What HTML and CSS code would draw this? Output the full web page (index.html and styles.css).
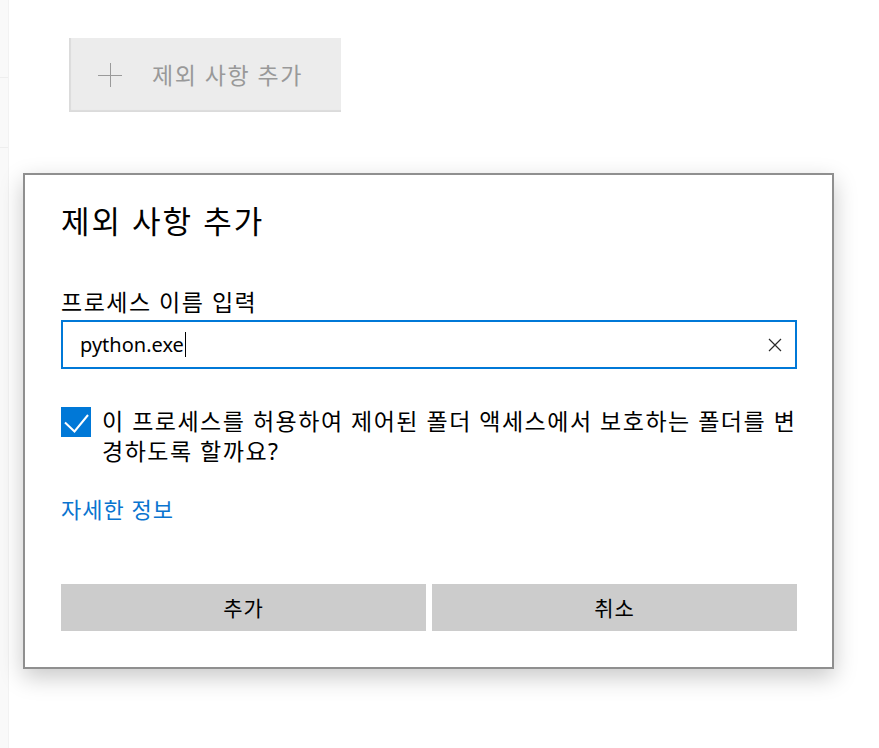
FILE: index.html
```html
<!DOCTYPE html>
<html lang="ko">
<head>
<meta charset="utf-8">
<title>제외 사항 추가</title>
<link rel="stylesheet" href="styles.css">
</head>
<body>
<div class="page">
  <div class="strip">
    <div class="strip-cell strip-a"></div>
    <div class="strip-cell strip-b"></div>
    <div class="strip-cell strip-c"></div>
  </div>
  <div class="main">
    <div class="add-btn">
      <svg class="plus" width="24" height="24" viewBox="0 0 24 24"><path d="M0 12.5H24M12.5 0V24" stroke="#9a9a9a" stroke-width="1" fill="none"/></svg>
      <span class="add-label">제외 사항 추가</span>
    </div>
    <div class="dialog">
      <div class="title">제외 사항 추가</div>
      <div class="field-label">프로세스 이름 입력</div>
      <div class="input">
        <span class="input-text">python.exe</span><span class="caret"></span>
        <svg class="clear" width="14" height="14" viewBox="0 0 14 14"><path d="M1 1L13 13M13 1L1 13" stroke="#2b2b2b" stroke-width="1.2" fill="none"/></svg>
      </div>
      <div class="check-row">
        <div class="checkbox">
          <svg width="30" height="30" viewBox="0 0 30 30"><path d="M4 15.5L13.5 24.5L27 8" stroke="#fff" stroke-width="2" fill="none"/></svg>
        </div>
        <div class="check-text">이 프로세스를 허용하여 제어된 폴더 액세스에서 보호하는 폴더를 변경하도록 할까요?</div>
      </div>
      <div class="link">자세한 정보</div>
      <div class="buttons">
        <div class="btn">추가</div>
        <div class="btn">취소</div>
      </div>
    </div>
  </div>
</div>
</body>
</html>
```
FILE: styles.css
```css
html, body {
  margin: 0;
  padding: 0;
  background: #ffffff;
}
body {
  font-family: "Noto Sans", "Noto Sans CJK KR", sans-serif;
  color: #000;
}
.page {
  display: flex;
  width: 879px;
  height: 748px;
  overflow: hidden;
}
.strip {
  width: 8px;
  flex: none;
  background: #f9f9f9;
  border-right: 1px solid #f2f2f2;
  display: flex;
  flex-direction: column;
}
.strip-cell {
  border-bottom: 1px solid #eeeeee;
}
.strip-a { height: 77px; }
.strip-b { height: 69px; }
.strip-c { flex: 1; border-bottom: none; }
.main {
  flex: 1;
  padding-top: 38px;
  padding-left: 14px;
}
.add-btn {
  margin-left: 46px;
  width: 272px;
  height: 74px;
  box-sizing: border-box;
  background: #ececec;
  box-shadow: inset 2px -2px 1px rgba(0, 0, 0, 0.07);
  display: flex;
  align-items: center;
  padding-left: 29px;
}
.plus {
  flex: none;
  margin-top: -1px;
}
.add-label {
  margin-left: 30px;
  font-size: 23px;
  line-height: 30px;
  letter-spacing: 1.5px;
  color: #999999;
}
.dialog {
  margin-top: 61px;
  width: 811px;
  height: 496px;
  box-sizing: border-box;
  border: 2px solid #8f8f8f;
  background: #fff;
  box-shadow: 0 8px 22px rgba(0, 0, 0, 0.22);
  padding: 26px 35px 0 36px;
}
.title {
  font-size: 31px;
  line-height: 40px;
  height: 40px;
  letter-spacing: 2px;
}
.field-label {
  margin-top: 47px;
  font-size: 23px;
  line-height: 28px;
  letter-spacing: 1.5px;
}
.input {
  margin-top: 4px;
  height: 49px;
  box-sizing: border-box;
  border: 2px solid #0078d7;
  display: flex;
  align-items: center;
  padding-left: 17px;
  padding-right: 13px;
}
.input-text {
  font-size: 20px;
  color: #000;
}
.caret {
  width: 1px;
  height: 25px;
  background: #000;
  margin-left: 1px;
}
.clear {
  margin-left: auto;
  flex: none;
}
.check-row {
  margin-top: 37px;
  display: flex;
  align-items: flex-start;
}
.checkbox {
  flex: none;
  width: 30px;
  height: 30px;
  margin-top: 1px;
  background: #0078d7;
}
.checkbox svg {
  display: block;
}
.check-text {
  margin-left: 11px;
  font-size: 23px;
  line-height: 30px;
  letter-spacing: 1.5px;
}
.link {
  margin-top: 29px;
  font-size: 22px;
  line-height: 28px;
  letter-spacing: 1px;
  color: #0a74cf;
}
.buttons {
  margin-top: 61px;
  display: grid;
  grid-template-columns: 1fr 1fr;
  gap: 6px;
}
.btn {
  height: 47px;
  background: #cccccc;
  display: flex;
  align-items: center;
  justify-content: center;
  font-size: 21px;
  line-height: 28px;
  letter-spacing: 1px;
}
```
